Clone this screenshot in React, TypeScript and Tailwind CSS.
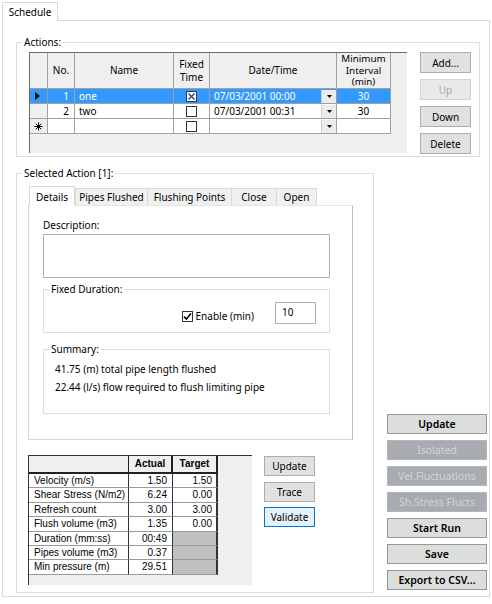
import React from "react";

// Win10-ish form controls

function Btn({ children, w = "w-[51px]", h = "h-[21px]", kind = "normal" }: { children: React.ReactNode; w?: string; h?: string; kind?: string }) {
  const look =
    kind === "disabled"
      ? "bg-[#e9e9e9] border-[#d3d3d3] text-[#a8a8a8]"
      : kind === "focus"
      ? "bg-[#e5f1fb] border-[#0078d7] text-black"
      : "bg-[#e1e1e1] border-[#adadad] text-black";
  return <div className={`${w} ${h} ${look} border flex items-center justify-center leading-[14px]`}>{children}</div>;
}

function SideBtn({ children, off }: { children: React.ReactNode; off?: boolean }) {
  return (
    <div
      className={
        off
          ? "h-[20px] w-full border border-[#b3b7bb] bg-[#a8acb0] text-[#d2d5d8] flex items-center justify-center leading-[14px]"
          : "h-[20px] w-full border border-[#969896] bg-[#dcdedc] text-black font-semibold flex items-center justify-center leading-[14px]"
      }
    >
      {children}
    </div>
  );
}

function Legend({ children }: { children: React.ReactNode }) {
  return <legend className="ml-[5px] px-[2px] leading-[14px]">{children}</legend>;
}

function Check({ mark }: { mark?: "x" | "v" }) {
  return (
    <svg width="11" height="11" viewBox="0 0 11 11">
      <rect x="0.5" y="0.5" width="10" height="10" fill="#fff" stroke={mark === "x" ? "#1f3d6b" : "#333"} />
      {mark === "x" && (
        <g stroke="#1f3d6b" strokeWidth="1.3">
          <path d="M2.5 2.5 L8.5 8.5 M8.5 2.5 L2.5 8.5" />
        </g>
      )}
      {mark === "v" && <path d="M2 5.6 L4.4 8 L9 2.6" fill="none" stroke="#000" strokeWidth="1.6" />}
    </svg>
  );
}

function Drop() {
  return (
    <div className="ml-auto w-[15px] h-[13px] bg-[#ececec] border-l border-[#cfcfcf] flex items-center justify-center">
      <svg width="5" height="3" viewBox="0 0 5 3">
        <polygon points="0,0 5,0 2.5,3" fill="#000" />
      </svg>
    </div>
  );
}

const line = "border-r border-b border-[#a0a0a0]";

function ActionsGrid() {
  const rows = [
    { no: "1", name: "one", fixed: "x" as const, date: "07/03/2001 00:00", min: "30", sel: true },
    { no: "2", name: "two", fixed: undefined, date: "07/03/2001 00:31", min: "30", sel: false },
  ];
  return (
    <div className="w-[378px] h-[101px] bg-[#efefef] border-l border-t border-[#6b6b6b]">
      <div className="flex h-[36px]">
        <div className={`w-[18px] ${line}`} />
        <div className={`w-[27px] ${line} flex items-center justify-center`}>No.</div>
        <div className={`w-[99px] ${line} flex items-center justify-center`}>Name</div>
        <div className={`w-[36px] ${line} flex flex-col items-center justify-center text-center leading-[13px]`}>
          <span>Fixed</span>
          <span>Time</span>
        </div>
        <div className={`w-[127px] ${line} flex items-center justify-center`}>Date/Time</div>
        <div className={`w-[54px] ${line} flex flex-col items-center justify-center text-center leading-[11.5px] text-[9.8px]`}>
          <span>Minimum</span>
          <span>Interval</span>
          <span>(min)</span>
        </div>
      </div>
      {rows.map((r) => {
        const c = r.sel ? "bg-[#3399ff] text-white" : "bg-white text-black";
        return (
          <div key={r.no} className="flex h-[15px] leading-[14px]">
            <div className={`w-[18px] ${line} ${r.sel ? "bg-[#3399ff]" : ""} flex items-center pl-[5px]`}>
              {r.sel && (
                <svg width="5" height="8" viewBox="0 0 5 8">
                  <polygon points="0,0 5,4 0,8" fill="#000" />
                </svg>
              )}
            </div>
            <div className={`w-[27px] ${line} ${c} text-right pr-[5px]`}>{r.no}</div>
            <div className={`w-[99px] ${line} ${c} pl-[4px]`}>{r.name}</div>
            <div className={`w-[36px] ${line} ${c} flex items-center justify-center`}>
              <Check mark={r.fixed} />
            </div>
            <div className={`w-[127px] ${line} ${c} pl-[4px] flex items-center`}>
              <span>{r.date}</span>
              <Drop />
            </div>
            <div className={`w-[54px] ${line} ${c} text-center`}>{r.min}</div>
          </div>
        );
      })}
      <div className="flex h-[15px]">
        <div className={`w-[18px] ${line} flex items-center justify-center`}>
          <svg width="9" height="9" viewBox="0 0 9 9">
            <path d="M4.5 0.5 V8.5 M0.5 4.5 H8.5 M1.7 1.7 L7.3 7.3 M7.3 1.7 L1.7 7.3" stroke="#000" strokeWidth="1" />
          </svg>
        </div>
        <div className={`w-[27px] ${line} bg-white`} />
        <div className={`w-[99px] ${line} bg-white`} />
        <div className={`w-[36px] ${line} bg-white flex items-center justify-center`}>
          <Check />
        </div>
        <div className={`w-[127px] ${line} bg-white flex items-center`}>
          <Drop />
        </div>
        <div className={`w-[54px] ${line} bg-white`} />
      </div>
    </div>
  );
}

function StatsGrid() {
  const data: [string, string, string | null][] = [
    ["Velocity (m/s)", "1.50", "1.50"],
    ["Shear Stress (N/m2)", "6.24", "0.00"],
    ["Refresh count", "3.00", "3.00"],
    ["Flush volume (m3)", "1.35", "0.00"],
    ["Duration (mm:ss)", "00:49", null],
    ["Pipes volume (m3)", "0.37", null],
    ["Min pressure (m)", "29.51", null],
  ];
  return (
    <div className="w-[224px] h-[130px] bg-[#efefef] border-l border-t border-[#333] font-['Liberation_Sans',Arial,sans-serif] text-[10px] text-black">
      <div className="flex h-[18px] font-bold leading-[16px]">
        <div className="w-[100px] border-r border-b-2 border-[#222] bg-[#efefef]" />
        <div className="w-[44px] border-r-2 border-b-2 border-[#222] bg-[#efefef] text-center">Actual</div>
        <div className="w-[45px] border-r-2 border-b-2 border-[#222] bg-[#efefef] text-center">Target</div>
      </div>
      {data.map(([k, a, t]) => (
        <div key={k} className="flex h-[14.4px] leading-[13px]">
          <div className="w-[100px] bg-white border-r border-b border-r-[#333] border-b-[#9a9a9a] pl-[5px]">{k}</div>
          <div className="w-[44px] bg-white border-r border-b border-r-[#333] border-b-[#9a9a9a] text-right pr-[5px]">{a}</div>
          <div
            className={`w-[45px] border-r-2 border-b border-r-[#333] border-b-[#9a9a9a] text-right pr-[4px] ${
              t === null ? "bg-[#bec1be]" : "bg-white"
            }`}
          >
            {t}
          </div>
        </div>
      ))}
    </div>
  );
}

export default function App() {
  return (
    <div className="w-[492px] h-[604px] bg-white font-['Noto_Sans',sans-serif] text-[10px] text-black overflow-hidden">
      {/* tab strip */}
      <div className="h-[20px] flex items-end pl-[2px]">
        <div className="relative z-10 -mb-px w-[56px] h-[19px] bg-white border border-b-0 border-[#d9d9d9] flex items-center justify-center leading-[14px]">
          Schedule
        </div>
      </div>
      <div className="ml-[2px] w-[488px] h-[577px] border border-[#d9d9d9] bg-white">
        {/* Actions */}
        <fieldset className="ml-[13px] mt-[14px] w-[464px] h-[122px] border border-[#dcdcdc] p-0 m-0">
          <Legend>Actions:</Legend>
          <div className="flex pl-[12px] pt-[3px]">
            <ActionsGrid />
            <div className="ml-[13px] flex flex-col gap-[6px]">
              <Btn>Add...</Btn>
              <Btn kind="disabled">Up</Btn>
              <Btn>Down</Btn>
              <Btn>Delete</Btn>
            </div>
          </div>
        </fieldset>

        <div className="mt-[9px] flex items-end">
          {/* Selected action */}
          <fieldset className="ml-[13px] w-[358px] h-[427px] border border-[#dcdcdc] p-0 m-0">
            <Legend>Selected Action [1]:</Legend>
            <div className="pl-[11px] pt-[6px]">
              <div className="flex items-end h-[20px] pl-[1px] leading-[14px]">
                <div className="relative z-10 w-[46px] h-[20px] bg-white border border-b-0 border-[#d9d9d9] flex items-center justify-center">
                  Details
                </div>
                <div className="w-[73px] h-[17px] mb-px bg-[#f0f0f0] border border-b-0 border-[#d9d9d9] flex items-center justify-center">
                  Pipes Flushed
                </div>
                <div className="w-[84px] h-[17px] mb-px bg-[#f0f0f0] border border-l-0 border-b-0 border-[#d9d9d9] flex items-center justify-center">
                  Flushing Points
                </div>
                <div className="w-[45px] h-[17px] mb-px bg-[#f0f0f0] border border-l-0 border-b-0 border-[#d9d9d9] flex items-center justify-center">
                  Close
                </div>
                <div className="w-[40px] h-[17px] mb-px bg-[#f0f0f0] border border-l-0 border-b-0 border-[#d9d9d9] flex items-center justify-center">
                  Open
                </div>
              </div>
              <div className="-mt-px w-[325px] h-[235px] border border-[#d6d6d6] border-t-[#e6e6e6] border-r-[#bfb8c2] pl-[14px]">
                <div className="mt-[12px] leading-[14px]">Description:</div>
                <div className="mt-[2px] w-[287px] h-[44px] border border-[#b0b0b0] bg-white" />
                <fieldset className="mt-[4px] w-[287px] h-[51px] border border-[#dcdcdc] p-0 m-0">
                  <Legend>Fixed Duration:</Legend>
                  <div className="flex items-start justify-end pr-[13px] pt-[6px]">
                    <div className="mt-[7px] flex items-center gap-[3px] leading-[14px]">
                      <Check mark="v" />
                      <span>Enable (min)</span>
                    </div>
                    <div className="ml-[21px] w-[41px] h-[22px] border border-[#b0b0b0] bg-white pl-[6px] pt-[2px] leading-[14px]">
                      10
                    </div>
                  </div>
                </fieldset>
                <fieldset className="mt-[9px] w-[287px] h-[72px] border border-[#dcdcdc] p-0 m-0">
                  <Legend>Summary:</Legend>
                  <div className="pl-[11px] pt-[4px] leading-[18px]">
                    <div>41.75 (m) total pipe length flushed</div>
                    <div>22.44 (l/s) flow required to flush limiting pipe</div>
                  </div>
                </fieldset>
              </div>
              <div className="mt-[15px] flex items-start">
                <StatsGrid />
                <div className="ml-[12px] mt-px flex flex-col gap-[5.5px]">
                  <Btn h="h-[20px]">Update</Btn>
                  <Btn h="h-[20px]">Trace</Btn>
                  <Btn h="h-[20px]" kind="focus">
                    Validate
                  </Btn>
                </div>
              </div>
            </div>
          </fieldset>

          {/* right column */}
          <div className="ml-[13px] mb-[3px] w-[100px] flex flex-col gap-[6px] text-[10.5px]">
            <SideBtn>Update</SideBtn>
            <SideBtn off>Isolated</SideBtn>
            <SideBtn off>Vel.Fluctuations</SideBtn>
            <SideBtn off>Sh.Stress Flucts</SideBtn>
            <SideBtn>Start Run</SideBtn>
            <SideBtn>Save</SideBtn>
            <SideBtn>Export to CSV...</SideBtn>
          </div>
        </div>
      </div>
    </div>
  );
}
